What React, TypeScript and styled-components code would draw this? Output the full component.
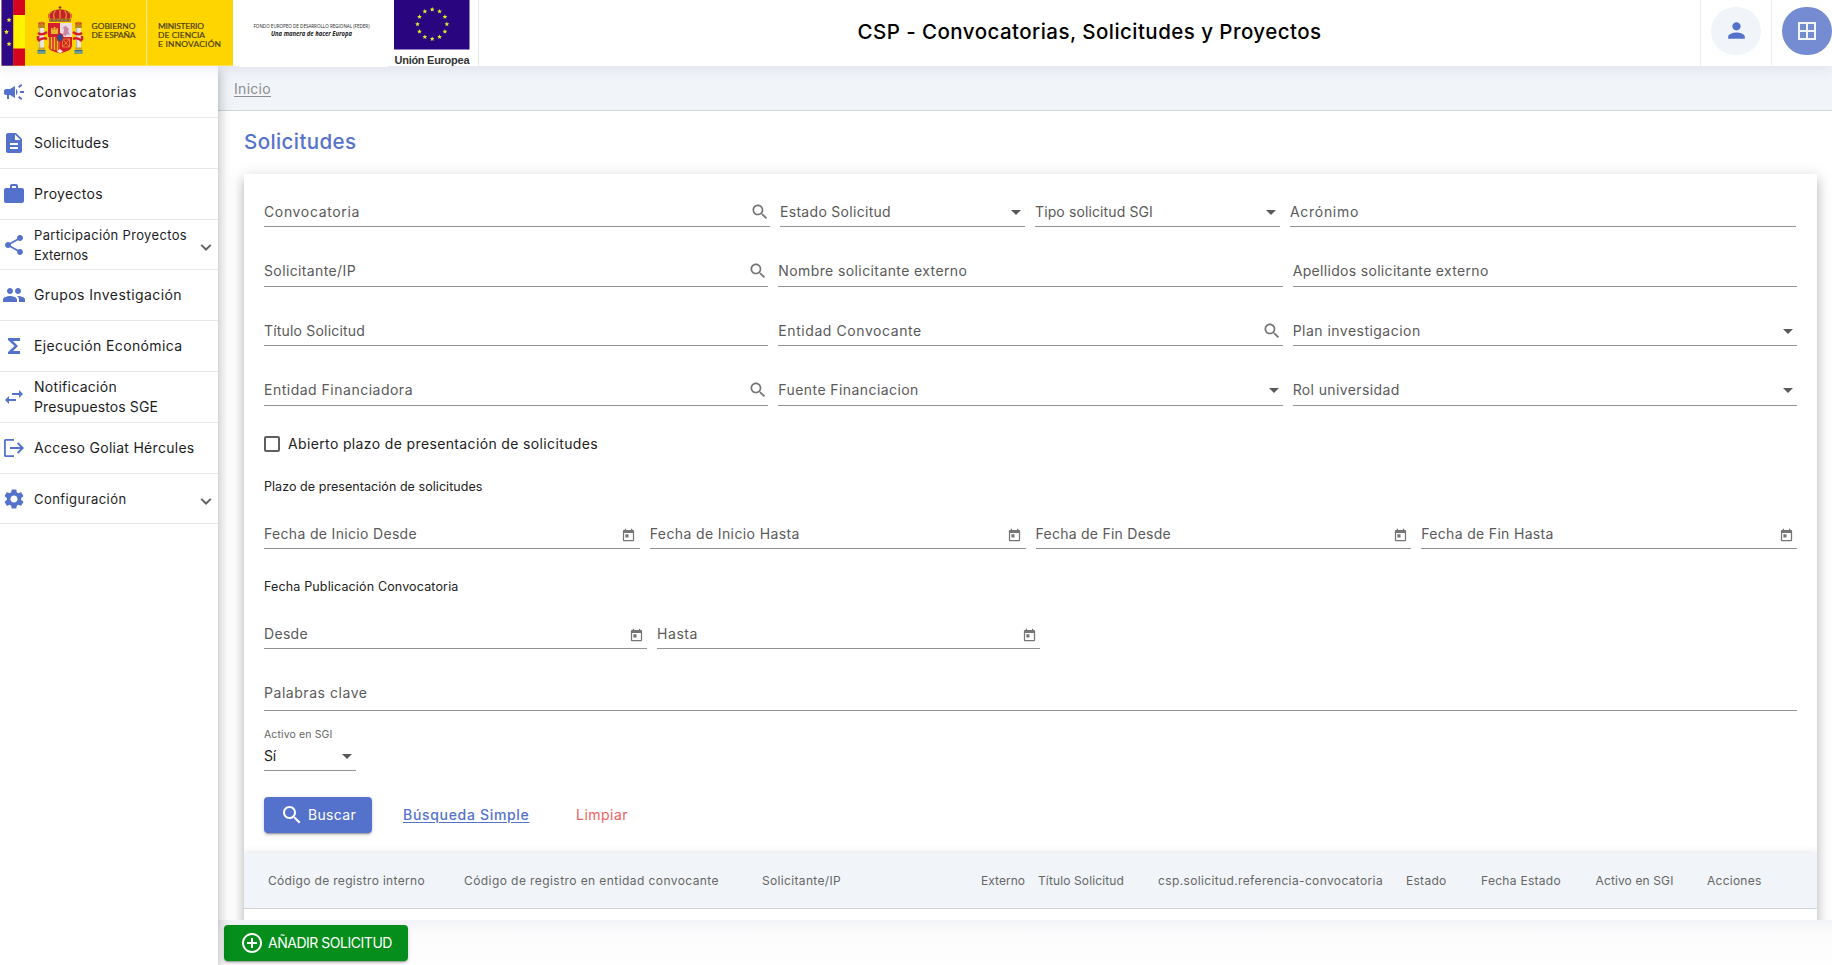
import React, { useLayoutEffect, useRef, useState } from 'react';
import styled, { createGlobalStyle } from 'styled-components';

const GlobalStyle = createGlobalStyle`
  * { box-sizing: border-box; }
  html, body { margin: 0; padding: 0; background: #fff; }
  body {
    font-family: Inter, "Open Sans", sans-serif;
    font-size: 14px;
    line-height: 20px;
    color: rgba(0, 0, 0, 0.87);
    overflow: hidden;
  }
`;

const elevation = `
  0 5px 5px -3px rgba(0, 0, 0, 0.2),
  0 8px 10px 1px rgba(0, 0, 0, 0.14),
  0 3px 14px 2px rgba(0, 0, 0, 0.12)`;

/* ---------- text with a fitted measure ---------- */

const FitSpan = styled.span<{ $underline?: boolean }>`
  display: inline-block;
  white-space: nowrap;
  text-decoration: ${(p) => (p.$underline ? 'underline' : 'none')};
  text-underline-offset: 2px;
  text-decoration-thickness: 1px;
`;

function Fit({ text, width, underline }: { text: string; width: number; underline?: boolean }) {
  const ref = useRef<HTMLSpanElement>(null);
  const [spacing, setSpacing] = useState(0);
  useLayoutEffect(() => {
    if (ref.current) {
      ref.current.style.letterSpacing = '0px';
      const natural = ref.current.getBoundingClientRect().width;
      const next = (width - natural) / text.length;
      ref.current.style.letterSpacing = `${next}px`;
      setSpacing(next);
    }
  }, [text, width]);
  return (
    <FitSpan ref={ref} $underline={underline} style={{ letterSpacing: `${spacing}px` }}>
      {text}
    </FitSpan>
  );
}

/* ---------- icons ---------- */

const Svg = styled.svg<{ $size: number }>`
  display: block;
  flex: none;
  width: ${(p) => p.$size}px;
  height: ${(p) => p.$size}px;
  fill: currentColor;
`;

const paths = {
  campaign:
    'M18 11v2h4v-2h-4zm-2 6.61c.96.71 2.21 1.65 3.2 2.39.4-.53.8-1.07 1.2-1.6-.99-.74-2.24-1.68-3.2-2.4-.4.54-.8 1.08-1.2 1.61zM20.4 5.6c-.4-.53-.8-1.07-1.2-1.6-.99.74-2.24 1.68-3.2 2.4.4.53.8 1.07 1.2 1.6.96-.72 2.21-1.65 3.2-2.4zM4 9c-1.1 0-2 .9-2 2v2c0 1.1.9 2 2 2h1v4h2v-4h1l5 3V6L8 9H4zm11.5 3c0-1.33-.58-2.53-1.5-3.35v6.69c.92-.81 1.5-2.01 1.5-3.34z',
  description:
    'M14 2H6c-1.1 0-1.99.9-1.99 2L4 20c0 1.1.89 2 1.99 2H18c1.1 0 2-.9 2-2V8l-6-6zm2 16H8v-2h8v2zm0-4H8v-2h8v2zm-3-5V3.5L18.5 9H13z',
  work: 'M20 6h-4V4c0-1.11-.89-2-2-2h-4c-1.11 0-2 .89-2 2v2H4c-1.11 0-1.99.89-1.99 2L2 19c0 1.11.89 2 2 2h16c1.11 0 2-.89 2-2V8c0-1.11-.89-2-2-2zm-6 0h-4V4h4v2z',
  share:
    'M18 16.08c-.76 0-1.44.3-1.96.77L8.91 12.7c.05-.23.09-.46.09-.7s-.04-.47-.09-.7l7.05-4.11c.54.5 1.25.81 2.04.81 1.66 0 3-1.34 3-3s-1.34-3-3-3-3 1.34-3 3c0 .24.04.47.09.7L8.04 9.81C7.5 9.31 6.79 9 6 9c-1.66 0-3 1.34-3 3s1.34 3 3 3c.79 0 1.5-.31 2.04-.81l7.12 4.16c-.05.21-.08.43-.08.65 0 1.61 1.31 2.92 2.92 2.92s2.92-1.31 2.92-2.92-1.31-2.92-2.92-2.92z',
  people:
    'M16 11c1.66 0 2.99-1.34 2.99-3S17.66 5 16 5s-3 1.34-3 3 1.34 3 3 3zm-8 0c1.66 0 2.99-1.34 2.99-3S9.66 5 8 5 5 6.34 5 8s1.34 3 3 3zm0 2c-2.33 0-7 1.17-7 3.5V19h14v-2.500C15 14.170 10.330 13 8 13zm8 0c-.29 0-.62.02-.97.05 1.16.84 1.97 1.97 1.97 3.450V19h6v-2.500c0-2.330-4.670-3.500-7-3.500z',
  functions: 'M18 4H6v2l6.500 6L6 18v2h12v-3h-7l5-5-5-5h7z',
  swap: 'M6.990 11L3 15l3.990 4v-3H14v-2H6.990v-3zM21 9l-3.990-4v3H10v2h7.010v3L21 9z',
  exit: 'M2 4.500Q2 3 3.500 3H12v1.800H3.800V19.200H12V21H3.500Q2 21 2 19.500zM8 11h10.200l-3.300-3.300 1.400-1.400L22 12l-5.700 5.700-1.400-1.400 3.300-3.300H8z',
  settings:
    'M19.14 12.94c.04-.3.06-.61.06-.94 0-.32-.02-.64-.07-.94l2.03-1.58c.18-.14.23-.41.12-.61l-1.92-3.32c-.12-.22-.37-.29-.59-.22l-2.39.96c-.5-.38-1.03-.7-1.62-.94l-.36-2.54c-.04-.24-.24-.41-.48-.41h-3.84c-.24 0-.43.17-.47.41l-.36 2.54c-.59.24-1.13.57-1.62.94l-2.39-.96c-.22-.08-.47 0-.59.22L2.74 8.87c-.12.21-.08.47.12.61l2.03 1.58c-.05.3-.09.63-.09.94s.02.64.07.94l-2.03 1.58c-.18.14-.23.41-.12.61l1.92 3.32c.12.22.37.29.59.22l2.39-.96c.5.38 1.03.7 1.62.94l.36 2.54c.05.24.24.41.48.41h3.84c.24 0 .44-.17.47-.41l.36-2.54c.59-.24 1.13-.56 1.62-.94l2.39.96c.22.08.47 0 .59-.22l1.92-3.32c.12-.22.07-.47-.12-.61l-2.01-1.58zM12 15.600c-1.980 0-3.600-1.620-3.600-3.600s1.620-3.600 3.600-3.600 3.600 1.620 3.600 3.600-1.620 3.600-3.600 3.600z',
  search:
    'M15.5 14h-.79l-.28-.27C15.41 12.59 16 11.11 16 9.500 16 5.910 13.090 3 9.500 3S3 5.910 3 9.500 5.910 16 9.500 16c1.610 0 3.090-.59 4.230-1.570l.27.28v.79l5 4.990L20.490 19l-4.990-5zm-6 0C7.010 14 5 11.990 5 9.500S7.010 5 9.500 5 14 7.010 14 9.500 11.990 14 9.500 14z',
  today:
    'M19 3h-1V1h-2v2H8V1H6v2H5c-1.110 0-1.990.9-1.990 2L3 19c0 1.100.89 2 2 2h14c1.100 0 2-.9 2-2V5c0-1.100-.9-2-2-2zm0 16H5V8h14v11zM7 10h5v5H7z',
  person:
    'M12 12c2.210 0 4-1.790 4-4s-1.790-4-4-4-4 1.790-4 4 1.790 4 4 4zm0 2c-2.670 0-8 1.340-8 4v2h16v-2c0-2.660-5.330-4-8-4z',
  grid: 'M3 3v18h18V3H3zm8 16H5v-6h6v6zm0-8H5V5h6v6zm8 8h-6v-6h6v6zm0-8h-6V5h6v6z',
  addCircle:
    'M13 7h-2v4H7v2h4v4h2v-4h4v-2h-4V7zm-1-5C6.480 2 2 6.480 2 12s4.480 10 10 10 10-4.480 10-10S17.520 2 12 2zm0 18c-4.410 0-8-3.590-8-8s3.590-8 8-8 8 3.590 8 8-3.590 8-8 8z',
};

function Icon({ name, size = 24 }: { name: keyof typeof paths; size?: number }) {
  return (
    <Svg $size={size} viewBox="0 0 24 24" aria-hidden="true">
      <path d={paths[name]} />
    </Svg>
  );
}

/* ---------- header ---------- */

const Page = styled.div`
  width: 100%;
  height: 100vh;
  display: flex;
  flex-direction: column;
`;

const Header = styled.header`
  position: relative;
  z-index: 3;
  flex: none;
  height: 66px;
  display: flex;
  background: #fff;
  box-shadow: 0 2px 14px rgba(70, 50, 130, 0.11);
`;

const LogoArea = styled.div`
  width: 479px;
  border-right: 1px solid #e9ebf2;
`;

const LogoSvg = styled.svg`
  display: block;
  overflow: visible;
`;

const AppTitle = styled.h1`
  flex: 1;
  margin: 0;
  display: flex;
  align-items: center;
  justify-content: center;
  padding-bottom: 3px;
  font-size: 20.500px;
  font-weight: 500;
  color: #000;
`;

const HeaderCell = styled.div<{ $width: number; $line: number }>`
  width: ${(p) => p.$width}px;
  height: ${(p) => p.$line}px;
  border-left: 1px solid #e9ebf2;
  padding: 7px 0 0 10px;
`;

const RoundButton = styled.button<{ $primary?: boolean }>`
  width: 50px;
  height: 48px;
  padding: 0 0 1px;
  border: 0;
  border-radius: 25px;
  display: flex;
  align-items: center;
  justify-content: center;
  background: ${(p) => (p.$primary ? '#768cd2' : '#f1f5f9')};
  color: ${(p) => (p.$primary ? '#f1f5f9' : '#5472cc')};
`;

function star(cx: number, cy: number, r: number) {
  return Array.from({ length: 10 }, (_, i) => {
    const a = (Math.PI * i) / 5 - Math.PI / 2;
    const q = i % 2 ? r * 0.45 : r;
    return `${(cx + q * Math.cos(a)).toFixed(2)},${(cy + q * Math.sin(a)).toFixed(2)}`;
  }).join(' ');
}

function CoatOfArms() {
  return (
    <g>
      {[41.5, 78.5].map((x) => (
        <g key={x}>
          <rect x={x - 2.500} y="28" width="5" height="20" fill="#e9e6df" />
          <rect x={x - 2.500} y="28" width="1.200" height="20" fill="#b5b3bb" />
          <rect x={x - 3} y="22.500" width="6" height="2.500" fill="#d41f2c" />
          <rect x={x - 3.500} y="26" width="7" height="2" fill="#b98a20" />
          <path d={`M${x - 3} 26l-.5-3 2 1 1.500-3 1.500 3 2-1-.5 3z`} fill="#c8781e" />
          <rect x={x - 3.500} y="47.500" width="7" height="2.200" fill="#c9a227" />
          <path d={`M${x - 4} 50h8v3.500h-8z`} fill="#2c6f8e" />
          <path d={`M${x - 4} 52h8`} stroke="#d9e3d2" strokeWidth=".7" />
        </g>
      ))}
      <path d="M38 33q4 3 9-1M38 41q5-4 9-2M38 36v4" fill="none" stroke="#d41f2c" strokeWidth="2.400" />
      <path d="M82 33q-4 3-9-1M82 41q-5-4-9-2M82 36v4" fill="none" stroke="#d41f2c" strokeWidth="2.400" />
      <path d="M49.500 20q-4-6 2-8.500 4-2.500 8.500-2 4.500-.5 8.500 2 6 2.500 2 8.500z" fill="#c5202b" />
      <path d="M50 19q-3-5 2-7.500M54.500 19q-2-5 1-8.500M60 19V9M65.500 19q2-5-1-8.500M70 19q3-5-2-7.500" fill="none" stroke="#e0a92a" strokeWidth="1.100" />
      <path d="M60 6v4M58.500 7.500h3" stroke="#7a4a1c" strokeWidth="1.200" />
      <rect x="49" y="18.500" width="22" height="3.500" rx="1" fill="#b5721c" />
      <path d="M51 20.200h18" stroke="#2c6f8e" strokeWidth="1" strokeDasharray="2 2" />
      <path d="M48 23h24v22q0 5-6 6.500l-6 2-6-2q-6-1.500-6-6.500z" fill="#d41f2c" />
      <path d="M60 23h12v14H60z" fill="#eadbe0" />
      <path d="M63 35l1-5-1-3 3-1 3 3-1 2 2 4-3-1-1 2z" fill="#c886a0" />
      <path d="M51 34v-6h1.500v1.500h1V27h2v2.500h1V28H58v6z" fill="#e8b62c" />
      <path d="M48 37h12v14.500l-6-1.500q-6-1-6-5z" fill="#f2c21c" />
      <path d="M50 37v11.500M53 37v13M56 37v14M59 37v14" stroke="#d41f2c" strokeWidth="1.400" />
      <path d="M62.500 39h7v8h-7zM62.500 39l7 8M69.500 39l-7 8" fill="none" stroke="#e59a2a" strokeWidth=".8" />
      <path d="M57 51.500l3-2.500 3 2.500-3 1.800z" fill="#f0eadc" />
      <ellipse cx="60" cy="37.500" rx="3.200" ry="4" fill="#2b4f8f" stroke="#d41f2c" strokeWidth="1" />
    </g>
  );
}

function Logos() {
  return (
    <LogoSvg width="478" height="66" viewBox="0 0 478 66">
      <rect x="239" y="65" width="149" height="2" fill="#fff" />
      <rect x="1.500" width="231.500" height="65.700" fill="#ffd500" />
      <rect x="1.500" width="12" height="65.700" fill="#2e0a87" />
      <rect x="13.300" width="11.700" height="65.700" fill="#d6041d" />
      <rect x="13.300" y="15" width="11.700" height="33.500" fill="#fff200" />
      {[[9, 20], [6.500, 32], [9, 44]].map(([x, y]) => (
        <polygon key={y} points={star(x, y, 2.600)} fill="#f5e62c" />
      ))}
      <CoatOfArms />
      <rect x="146" width="1.300" height="65.700" fill="#ffea80" />
      <g fill="#4a3f10" fontFamily="Lato, sans-serif" fontSize="8.400" stroke="#4a3f10" strokeWidth=".2">
        <text x="91.500" y="28.800" textLength="44">GOBIERNO</text>
        <text x="91.500" y="38" textLength="44">DE ESPAÑA</text>
        <text x="158" y="28.800" textLength="46">MINISTERIO</text>
        <text x="158" y="38" textLength="47">DE CIENCIA</text>
        <text x="158" y="47" textLength="63">E INNOVACIÓN</text>
      </g>
      <g fill="#222" fontFamily="'Open Sans', sans-serif">
        <text x="253.500" y="28" fontSize="4.700" textLength="116" lengthAdjust="spacingAndGlyphs">
          FONDO EUROPEO DE DESARROLLO REGIONAL (FEDER)
        </text>
        <text x="271" y="35.500" fontSize="6.200" fontWeight="700" fontStyle="italic" textLength="81" lengthAdjust="spacingAndGlyphs">
          Una manera de hacer Europa
        </text>
      </g>
      <rect x="394" width="75.500" height="49.500" fill="#29057f" />
      {Array.from({ length: 12 }, (_, i) => {
        const a = (i * Math.PI) / 6;
        return (
          <polygon
            key={i}
            points={star(432.200 + 14.700 * Math.sin(a), 24.200 - 14.700 * Math.cos(a), 2.500)}
            fill="#d9ee2d"
          />
        );
      })}
      <text x="394.500" y="64" fontFamily="'Liberation Sans', sans-serif" fontWeight="700" fontSize="11" fill="#333" textLength="75">
        Unión Europea
      </text>
    </LogoSvg>
  );
}

/* ---------- side navigation ---------- */

const Body = styled.div`
  flex: 1;
  min-height: 0;
  display: flex;
`;

const Sidebar = styled.nav`
  position: relative;
  z-index: 2;
  flex: none;
  width: 218px;
  background: #fff;
  box-shadow: ${elevation};
`;

const NavItem = styled.a<{ $panel?: boolean }>`
  display: flex;
  align-items: center;
  height: ${(p) => (p.$panel ? 50 : 51)}px;
  padding: 0 6px 0 2px;
  border-bottom: 1px solid #e4e6ea;
  font-size: ${(p) => (p.$panel ? 13 : 14)}px;
  color: #1d1d1f;
`;

const NavFirst = styled.div`
  padding-top: 1px;
`;

const NavText = styled.span`
  flex: 1;
  display: flex;
  flex-direction: column;
  align-items: flex-start;
  padding-left: 8px;
`;

const NavIcon = styled.span`
  color: #5472cc;
`;

const Chevron = styled.svg`
  width: 12px;
  height: 7px;
  margin-top: 6px;
  fill: none;
  stroke: #626262;
  stroke-width: 2;
`;

type Line = [string, number];
const nav: { icon: keyof typeof paths; lines: Line[]; panel?: boolean }[] = [
  { icon: 'campaign', lines: [['Convocatorias', 103]] },
  { icon: 'description', lines: [['Solicitudes', 75]] },
  { icon: 'work', lines: [['Proyectos', 69]] },
  { icon: 'share', lines: [['Participación Proyectos', 153], ['Externos', 54]], panel: true },
  { icon: 'people', lines: [['Grupos Investigación', 148]] },
  { icon: 'functions', lines: [['Ejecución Económica', 148.500]] },
  { icon: 'swap', lines: [['Notificación', 83], ['Presupuestos SGE', 124]] },
  { icon: 'exit', lines: [['Acceso Goliat Hércules', 160.500]] },
  { icon: 'settings', lines: [['Configuración', 92.500]], panel: true },
];

/* ---------- main column ---------- */

const Main = styled.main`
  flex: 1;
  min-width: 0;
  display: flex;
  flex-direction: column;
`;

const Breadcrumb = styled.div`
  flex: none;
  height: 45px;
  padding: 13px 0 0 16px;
  background: #f1f5f9;
  border-bottom: 1px solid #d0d5da;
  color: #8b8d90;
`;

const Content = styled.section`
  flex: 1;
  min-height: 0;
  overflow: hidden;
  padding: 0 15px 0 26px;
`;

const PageTitle = styled.h2`
  height: 63px;
  margin: 0;
  padding-top: 20px;
  font-size: 20.500px;
  line-height: 22px;
  font-weight: 450;
  color: #5472cc;
`;

const Card = styled.div`
  height: 900px;
  background: #fff;
  box-shadow: ${elevation};
`;

const FilterForm = styled.form`
  padding: 0 20px;
`;

const Row = styled.div<{ $cols: string; $height: number }>`
  display: grid;
  grid-template-columns: ${(p) => p.$cols};
  column-gap: 10px;
  height: ${(p) => p.$height}px;
  align-items: end;
`;

const FieldBox = styled.div<{ $pad: number }>`
  display: flex;
  align-items: flex-end;
  justify-content: space-between;
  padding-bottom: ${(p) => p.$pad}px;
  border-bottom: 1px solid #939393;
  color: #5a5a5a;
`;

const FieldIcon = styled.span<{ $right: number; $bottom: number }>`
  margin: 0 ${(p) => p.$right}px ${(p) => p.$bottom}px 0;
  color: #757575;
`;

const Arrow = styled.span`
  width: 0;
  height: 0;
  margin: 0 4px 7px 0;
  border: 5px solid transparent;
  border-top-color: #5a5a5a;
  border-bottom-width: 0;
`;

const Heading = styled.div<{ $top: number; $bottom?: number }>`
  height: 20px;
  margin-top: ${(p) => p.$top}px;
  font-size: 12.500px;
  color: #222;
`;

const CheckRow = styled.label`
  display: flex;
  align-items: center;
  gap: 8px;
  height: 48px;
  padding-top: 28px;
  color: #222;
`;

const CheckBox = styled.span`
  width: 16px;
  height: 16px;
  border: 2px solid #5f5f5f;
  border-radius: 2px;
`;

const ActiveField = styled.div`
  width: 92px;
  padding-top: 16px;
  color: #222;
`;

const SmallLabel = styled.div`
  height: 16px;
  margin-bottom: 3px;
  font-size: 10.500px;
  line-height: 16px;
  color: #666;
`;

const ValueBox = styled(FieldBox)`
  color: #222;
`;

const Actions = styled.div`
  display: flex;
  align-items: center;
  margin-top: 26px;
  height: 36px;
`;

const Button = styled.button<{ $green?: boolean }>`
  display: flex;
  align-items: center;
  gap: 4px;
  width: ${(p) => (p.$green ? 184 : 108)}px;
  height: 36px;
  padding: 0 0 0 16px;
  border: 0;
  border-radius: 4px;
  background: ${(p) => (p.$green ? '#058e1b' : '#5472cc')};
  color: #fff;
  font: inherit;
  box-shadow: 0 3px 1px -2px rgba(0, 0, 0, 0.2), 0 2px 2px 0 rgba(0, 0, 0, 0.14), 0 1px 5px 0 rgba(0, 0, 0, 0.12);
`;

const LinkButton = styled.a<{ $danger?: boolean }>`
  margin-left: ${(p) => (p.$danger ? 46.5 : 31)}px;
  color: ${(p) => (p.$danger ? '#ee5f62' : '#5472cc')};
  font-weight: ${(p) => (p.$danger ? 400 : 450)};
`;

const TableHead = styled.div`
  display: grid;
  grid-template-columns: 196px 298px 219px 57px 120px 248px 75px 114.500px 111.500px 1fr;
  align-items: center;
  height: 56px;
  margin-top: 20px;
  padding-left: 24px;
  background: #f1f5f9;
  border-bottom: 1px solid #d3d6d9;
  box-shadow: 0 0 8px rgba(0, 0, 0, 0.13);
  clip-path: inset(-12px 0 0 0);
  font-size: 12px;
  color: #666;
`;

const Footer = styled.footer`
  flex: none;
  height: 45px;
  padding: 5px 0 0 6px;
  background: linear-gradient(#f2f3f8, #fcfcfd 13px, #fefefe);
`;

type Kind = 'search' | 'select' | 'date' | 'text';

function Field({ label, width, kind = 'text', pad = 4, iconRight = 1 }: {
  label: string;
  width: number;
  kind?: Kind;
  pad?: number;
  iconRight?: number;
}) {
  return (
    <FieldBox $pad={pad}>
      <Fit text={label} width={width} />
      {kind === 'search' && (
        <FieldIcon $right={iconRight} $bottom={0}>
          <Icon name="search" size={20} />
        </FieldIcon>
      )}
      {kind === 'select' && <Arrow />}
      {kind === 'date' && (
        <FieldIcon $right={3.500} $bottom={1.500}>
          <Icon name="today" size={15} />
        </FieldIcon>
      )}
    </FieldBox>
  );
}

const three = 'repeat(3, 1fr)';

const columns: Line[] = [
  ['Código de registro interno', 157],
  ['Código de registro en entidad convocante', 255],
  ['Solicitante/IP', 79],
  ['Externo', 44],
  ['Título Solicitud', 86],
  ['csp.solicitud.referencia-convocatoria', 225],
  ['Estado', 40.500],
  ['Fecha Estado', 80],
  ['Activo en SGI', 78],
  ['Acciones', 54.500],
];

export default function App() {
  return (
    <>
      <GlobalStyle />
      <Page>
        <Header>
          <LogoArea>
            <Logos />
          </LogoArea>
          <AppTitle>
            <Fit text="CSP - Convocatorias, Solicitudes y Proyectos" width={464} />
          </AppTitle>
          <HeaderCell $width={71} $line={66}>
            <RoundButton aria-label="Usuario">
              <Icon name="person" size={25} />
            </RoundButton>
          </HeaderCell>
          <HeaderCell $width={61} $line={65}>
            <RoundButton $primary aria-label="Aplicaciones">
              <Icon name="grid" size={24} />
            </RoundButton>
          </HeaderCell>
        </Header>
        <Body>
          <Sidebar>
            <NavFirst>
              {nav.map((item) => (
                <NavItem key={item.icon} $panel={item.panel}>
                  <NavIcon>
                    <Icon name={item.icon} />
                  </NavIcon>
                  <NavText>
                    {item.lines.map(([t, w]) => (
                      <Fit key={t} text={t} width={w} />
                    ))}
                  </NavText>
                  {item.panel && (
                    <Chevron viewBox="0 0 12 7">
                      <path d="M1.200.9L6 5.500 10.800.9" />
                    </Chevron>
                  )}
                </NavItem>
              ))}
            </NavFirst>
          </Sidebar>
          <Main>
            <Breadcrumb>
              <Fit text="Inicio" width={37} underline />
            </Breadcrumb>
            <Content>
              <PageTitle>
                <Fit text="Solicitudes" width={112.500} />
              </PageTitle>
              <Card>
                <FilterForm>
                  <Row $cols="506px 245px 245px 506px" $height={53}>
                    <Field label="Convocatoria" width={96} kind="search" iconRight={0.500} />
                    <Field label="Estado Solicitud" width={111} kind="select" />
                    <Field label="Tipo solicitud SGI" width={118} kind="select" />
                    <Field label="Acrónimo" width={69} />
                  </Row>
                  <Row $cols={three} $height={60}>
                    <Field label="Solicitante/IP" width={92} kind="search" pad={5} iconRight={0} />
                    <Field label="Nombre solicitante externo" width={189} pad={5} />
                    <Field label="Apellidos solicitante externo" width={196} pad={5} />
                  </Row>
                  <Row $cols={three} $height={59}>
                    <Field label="Título Solicitud" width={101} />
                    <Field label="Entidad Convocante" width={143.500} kind="search" iconRight={0.500} />
                    <Field label="Plan investigacion" width={128} kind="select" />
                  </Row>
                  <Row $cols={three} $height={60}>
                    <Field label="Entidad Financiadora" width={149} kind="search" pad={5} iconRight={0} />
                    <Field label="Fuente Financiacion" width={140.500} kind="select" pad={5} />
                    <Field label="Rol universidad" width={107} kind="select" pad={5} />
                  </Row>
                  <CheckRow>
                    <CheckBox />
                    <Fit text="Abierto plazo de presentación de solicitudes" width={310} />
                  </CheckRow>
                  <Heading $top={23}>
                    <Fit text="Plazo de presentación de solicitudes" width={218.500} />
                  </Heading>
                  <Row $cols="repeat(4, 1fr)" $height={52}>
                    <Field label="Fecha de Inicio Desde" width={153} kind="date" />
                    <Field label="Fecha de Inicio Hasta" width={150} kind="date" />
                    <Field label="Fecha de Fin Desde" width={135.500} kind="date" />
                    <Field label="Fecha de Fin Hasta" width={132.500} kind="date" />
                  </Row>
                  <Heading $top={28}>
                    <Fit text="Fecha Publicación Convocatoria" width={194.500} />
                  </Heading>
                  <Row $cols="383px 383px" $height={52}>
                    <Field label="Desde" width={44} kind="date" />
                    <Field label="Hasta" width={41} kind="date" />
                  </Row>
                  <Row $cols="1fr" $height={62}>
                    <Field label="Palabras clave" width={103.500} pad={7} />
                  </Row>
                  <ActiveField>
                    <SmallLabel>
                      <Fit text="Activo en SGI" width={68.500} />
                    </SmallLabel>
                    <ValueBox $pad={4}>
                      <Fit text="Sí" width={12} />
                      <Arrow />
                    </ValueBox>
                  </ActiveField>
                  <Actions>
                    <Button type="button">
                      <Icon name="search" />
                      <Fit text="Buscar" width={48} />
                    </Button>
                    <LinkButton>
                      <Fit text="Búsqueda Simple" width={126.500} underline />
                    </LinkButton>
                    <LinkButton $danger>
                      <Fit text="Limpiar" width={52} />
                    </LinkButton>
                  </Actions>
                </FilterForm>
                <TableHead>
                  {columns.map(([t, w]) => (
                    <span key={t}>
                      <Fit text={t} width={w} />
                    </span>
                  ))}
                </TableHead>
              </Card>
            </Content>
            <Footer>
              <Button type="button" $green>
                <Icon name="addCircle" />
                <Fit text="AÑADIR SOLICITUD" width={124} />
              </Button>
            </Footer>
          </Main>
        </Body>
      </Page>
    </>
  );
}
